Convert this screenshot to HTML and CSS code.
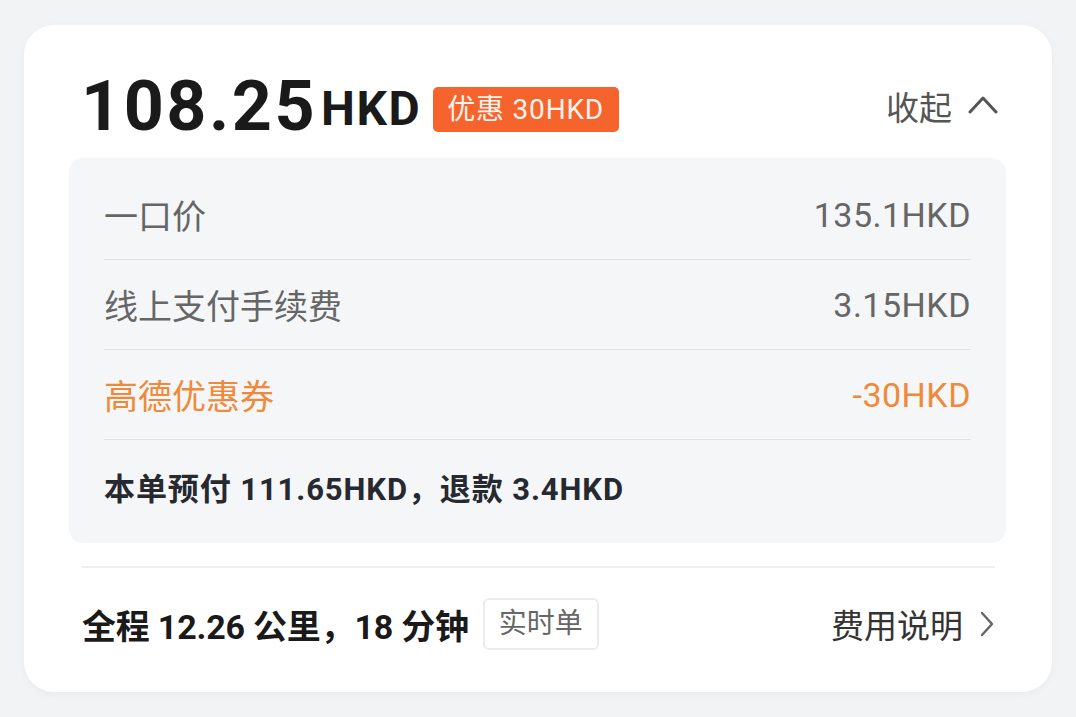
FILE: index.html
```html
<!DOCTYPE html>
<html lang="zh-CN">
<head>
    <meta charset="UTF-8">
    <meta name="viewport" content="width=device-width, initial-scale=1.0">
    <title>费用明细</title>
    <link rel="stylesheet" href="styles.css">
</head>
<body>
    <div class="page">
        <div class="card">
            <div class="header">
                <div class="total">
                    <span class="amount">108.25</span>
                    <span class="unit">HKD</span>
                    <span class="badge">优惠 30HKD</span>
                </div>
                <div class="toggle">
                    <span>收起</span>
                    <svg class="chevron-up" width="30" height="20" viewBox="0 0 30 20">
                        <polyline points="2,18 15,4 28,18" fill="none" stroke="#555" stroke-width="3" stroke-linecap="round" stroke-linejoin="round"/>
                    </svg>
                </div>
            </div>

            <div class="details">
                <div class="row">
                    <span>一口价</span>
                    <span class="value">135.1HKD</span>
                </div>
                <div class="row">
                    <span>线上支付手续费</span>
                    <span class="value">3.15HKD</span>
                </div>
                <div class="row discount">
                    <span>高德优惠券</span>
                    <span class="value">-30HKD</span>
                </div>
                <div class="row summary">
                    <span>本单预付 111.65HKD，退款 3.4HKD</span>
                </div>
            </div>

            <div class="footer">
                <div class="trip">
                    <span class="trip-text">全程 12.26 公里，18 分钟</span>
                    <span class="tag">实时单</span>
                </div>
                <div class="link">
                    <span>费用说明</span>
                    <svg width="16" height="28" viewBox="0 0 16 28">
                        <polyline points="3,3 13,14 3,25" fill="none" stroke="#666" stroke-width="2.5" stroke-linecap="round" stroke-linejoin="round"/>
                    </svg>
                </div>
            </div>
        </div>
    </div>
</body>
</html>
```

FILE: styles.css
```css
body {
    margin: 0;
    background-color: #f2f3f5;
    font-family: Roboto, "Noto Sans CJK SC", sans-serif;
    color: #1a1a1a;
}
.page {
    padding: 25px 24px 25px 24px;
}
.card {
    background-color: #fff;
    border-radius: 30px;
    padding: 28px 46px 12px 45px;
    box-shadow: 0 2px 8px rgba(0, 0, 0, 0.04);
}
.header {
    height: 105px;
    display: flex;
    align-items: center;
    justify-content: space-between;
    padding: 0 8px 0 12px;
}
.total {
    display: flex;
    align-items: center;
}
.amount {
    font-size: 70px;
    font-weight: 700;
    letter-spacing: 2.5px;
    line-height: 1;
}
.unit {
    font-size: 48px;
    font-weight: 700;
    letter-spacing: 1.5px;
    margin-left: 4px;
    margin-top: 6px;
    line-height: 1;
}
.badge {
    margin-left: 12px;
    margin-top: 8px;
    background-color: #f5642c;
    color: #fff3ee;
    font-size: 28px;
    letter-spacing: 0.8px;
    height: 45px;
    line-height: 45px;
    padding: 0 15px 0 14px;
    border-radius: 5px;
}
.toggle {
    display: flex;
    align-items: center;
    gap: 16px;
    font-size: 33px;
    color: #555;
}
.chevron-up {
    margin-top: -4px;
}
.details {
    background-color: #f5f6f8;
    border-radius: 14px;
    padding: 12px 35px 10px 35px;
}
.row {
    height: 89px;
    display: flex;
    align-items: center;
    justify-content: space-between;
    border-bottom: 1px solid #e0e1e4;
    font-size: 34px;
    color: #666;
}
.row .value {
    font-size: 34px;
    letter-spacing: 0.5px;
}
.row.discount {
    color: #f0893a;
}
.row.summary {
    border-bottom: none;
    height: 93px;
    font-size: 31px;
    font-weight: 700;
    letter-spacing: 0.9px;
    color: #26292f;
}
.footer {
    margin-top: 23px;
    border-top: 2px solid #eeeff1;
    margin-left: 13px;
    margin-right: 11px;
    height: 112px;
    display: flex;
    align-items: center;
    justify-content: space-between;
}
.trip {
    display: flex;
    align-items: center;
    gap: 14px;
}
.trip-text {
    font-size: 34px;
    font-weight: 700;
    letter-spacing: -0.2px;
    color: #1a1a1a;
}
.tag {
    height: 48px;
    line-height: 48px;
    padding: 0 14px;
    border: 2px solid #ebebeb;
    border-radius: 6px;
    font-size: 28px;
    color: #666;
}
.link {
    display: flex;
    align-items: center;
    gap: 16px;
    font-size: 33px;
    color: #333;
}
```
